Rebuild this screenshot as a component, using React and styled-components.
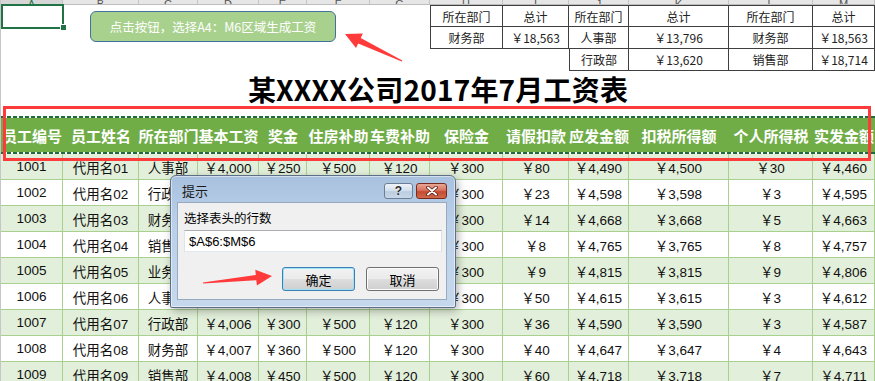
import styled, { createGlobalStyle } from 'styled-components';

const COLS = '62px 76px 59px 61px 48px 63px 60px 73px 66px 60px 100px 84px 62px';
const LETTERS = ['A', 'B', 'C', 'D', 'E', 'F', 'G', 'H', 'I', 'J', 'K', 'L', 'M'];

const HEADERS = [
  '员工编号', '员工姓名', '所在部门', '基本工资', '奖金', '住房补助', '车费补助',
  '保险金', '请假扣款', '应发金额', '扣税所得额', '个人所得税', '实发金额',
];

const ROWS = [
  ['1001', '代用名01', '人事部', '￥4,000', '￥250', '￥500', '￥120', '￥300', '￥80', '￥4,490', '￥4,500', '￥30', '￥4,460'],
  ['1002', '代用名02', '行政部', '￥4,001', '￥300', '￥500', '￥120', '￥300', '￥23', '￥4,598', '￥3,598', '￥3', '￥4,595'],
  ['1003', '代用名03', '财务部', '￥4,002', '￥360', '￥500', '￥120', '￥300', '￥14', '￥4,668', '￥3,668', '￥5', '￥4,663'],
  ['1004', '代用名04', '销售部', '￥4,003', '￥450', '￥500', '￥120', '￥300', '￥8', '￥4,765', '￥3,765', '￥8', '￥4,757'],
  ['1005', '代用名05', '业务部', '￥4,004', '￥500', '￥500', '￥120', '￥300', '￥9', '￥4,815', '￥3,815', '￥9', '￥4,806'],
  ['1006', '代用名06', '人事部', '￥4,005', '￥340', '￥500', '￥120', '￥300', '￥50', '￥4,615', '￥3,615', '￥3', '￥4,612'],
  ['1007', '代用名07', '行政部', '￥4,006', '￥300', '￥500', '￥120', '￥300', '￥36', '￥4,590', '￥3,590', '￥3', '￥4,587'],
  ['1008', '代用名08', '财务部', '￥4,007', '￥360', '￥500', '￥120', '￥300', '￥40', '￥4,647', '￥3,647', '￥4', '￥4,643'],
  ['1009', '代用名09', '销售部', '￥4,008', '￥450', '￥500', '￥120', '￥300', '￥60', '￥4,718', '￥3,718', '￥7', '￥4,711'],
];

// summary block, columns H..M, null = empty cell without border
const SUMMARY = [
  ['所在部门', '总计', '所在部门', '总计', '所在部门', '总计'],
  ['财务部', '￥18,563', '人事部', '￥13,796', '财务部', '￥18,563'],
  [null, null, '行政部', '￥13,620', '销售部', '￥18,714'],
];

const GlobalStyle = createGlobalStyle`
  html, body {
    margin: 0;
    padding: 0;
    background: #fff;
  }
  body {
    font-family: "Noto Sans CJK SC", "Liberation Sans", sans-serif;
    overflow: hidden;
  }
`;

const Page = styled.div`
  position: relative;
  width: 875px;
  height: 381px;
  overflow: hidden;
  background: #fff;
`;

const Sheet = styled.div`
  border-left: 1px solid #c6c6c6;
`;

const ColStrip = styled.div`
  display: grid;
  grid-template-columns: ${COLS};
  height: 4px;
  overflow: hidden;
  border-bottom: 1px solid #bdbdbd;
`;

const ColHead = styled.div`
  display: flex;
  align-items: flex-end;
  justify-content: center;
  background: ${(p) => (p.$active ? '#d6d6d6' : '#e6e6e6')};
  border-right: 1px solid #c4c4c4;
  color: ${(p) => (p.$active ? '#217346' : '#555')};
  font-family: "Liberation Sans", sans-serif;
  font-size: 11px;
`;

const ColLabel = styled.span`
  display: block;
  line-height: 8px;
  flex-shrink: 0;
`;

const TopRow = styled.div`
  display: grid;
  grid-template-columns: ${COLS};
  height: 22px;
`;

const Blank = styled.div``;

const SelectedCell = styled.div`
  position: relative;
`;

const SelectionBox = styled.div`
  position: absolute;
  left: 0;
  top: -1px;
  right: -1px;
  bottom: -2px;
  border: 2px solid #217346;
`;

const FillHandle = styled.div`
  position: absolute;
  right: -4px;
  bottom: -4px;
  width: 5px;
  height: 5px;
  background: #217346;
  border: 1px solid #fff;
`;

const SumCell = styled.div`
  display: flex;
  align-items: center;
  justify-content: center;
  box-sizing: border-box;
  font-size: 12px;
  color: #222;
  white-space: nowrap;
  border-right: 1px solid #3f3f3f;
  border-bottom: 1px solid #3f3f3f;
  border-top: ${(p) => (p.$top ? '1px solid #3f3f3f' : 'none')};
  border-left: ${(p) => (p.$edge ? '1px solid #3f3f3f' : 'none')};
`;

const TitleRow = styled.div`
  height: 35px;
  display: flex;
  align-items: center;
  justify-content: center;
  font-size: 28px;
  font-weight: 700;
  color: #000;
  letter-spacing: 0.2px;
`;

const Spacer = styled.div`
  height: 10px;
`;

const Dash = styled.div`
  height: 2px;
  background: repeating-linear-gradient(90deg, #1e6b3c 0 4px, #ffffff 4px 6px);
`;

const HeadRow = styled.div`
  display: grid;
  grid-template-columns: ${COLS};
  height: 34px;
  background: #70ad47;
`;

const HeadCell = styled.div`
  display: flex;
  align-items: center;
  justify-content: center;
  white-space: nowrap;
  color: #fff;
  font-size: 15px;
  font-weight: 700;
`;

const DataRow = styled.div`
  display: grid;
  grid-template-columns: ${COLS};
  height: 26px;
  background: ${(p) => (p.$shade ? '#e2efda' : '#ffffff')};
`;

const DataCell = styled.div`
  display: flex;
  align-items: center;
  justify-content: center;
  box-sizing: border-box;
  white-space: nowrap;
  border-right: 1px solid #a9d08e;
  border-bottom: 1px solid #a9d08e;
  font-family: "Liberation Sans", "Noto Sans CJK SC", sans-serif;
  font-size: 13.5px;
  color: #111;
`;

const ShapeButton = styled.div`
  position: absolute;
  left: 90px;
  top: 11px;
  width: 246px;
  height: 31px;
  box-sizing: border-box;
  display: flex;
  align-items: center;
  justify-content: center;
  background: #a9d18e;
  border: 1px solid #41719c;
  border-radius: 6px;
  color: #fff;
  font-size: 12.5px;
`;

const RedFrame = styled.div`
  position: absolute;
  left: 3px;
  top: 106px;
  width: 868px;
  height: 55px;
  box-sizing: border-box;
  border: 3px solid #fe3b3b;
`;

const Dialog = styled.div`
  position: absolute;
  left: 170px;
  top: 175px;
  width: 286px;
  height: 133px;
  box-sizing: border-box;
  display: flex;
  flex-direction: column;
  padding: 0 8px 7px 6px;
  border: 1px solid #5d6f86;
  border-radius: 6px 6px 2px 2px;
  background: linear-gradient(180deg, #a8c1de 0%, #bad0e9 35%, #c6d8ec 100%);
  box-shadow: 2px 3px 8px rgba(0, 0, 0, 0.3), inset 0 0 0 1px rgba(255, 255, 255, 0.5);
  font-family: "Liberation Sans", "Noto Sans CJK SC", sans-serif;
`;

const TitleBar = styled.div`
  height: 26px;
  box-sizing: border-box;
  padding: 3px 0 0 5px;
  display: flex;
  align-items: center;
  gap: 3px;
`;

const TitleText = styled.div`
  flex: 1;
  font-size: 13px;
  color: #1a1a1a;
`;

const CapButton = styled.div`
  width: ${(p) => (p.$close ? '31px' : '29px')};
  height: 16px;
  box-sizing: border-box;
  display: flex;
  align-items: center;
  justify-content: center;
  border: 1px solid ${(p) => (p.$close ? '#7a2a1c' : '#6d7f95')};
  border-radius: 3px;
  background: ${(p) =>
    p.$close
      ? 'linear-gradient(180deg, #e9a897 0%, #d7725d 45%, #c44a32 55%, #d06a4c 100%)'
      : 'linear-gradient(180deg, #eef3f9 0%, #d5e1ee 45%, #bccde1 55%, #c9d8e9 100%)'};
  color: #2a2a2a;
  font-size: 12px;
  font-weight: 700;
  text-shadow: 0 0 2px #fff;
`;

const Client = styled.div`
  flex: 1;
  display: flex;
  flex-direction: column;
  padding: 7px 4px 0 6px;
  background: #f0f0f0;
  border: 1px solid #98aac0;
`;

const Prompt = styled.div`
  font-size: 12.5px;
  line-height: 18px;
  color: #000;
`;

const Field = styled.div`
  margin-top: 2px;
  height: 22px;
  box-sizing: border-box;
  display: flex;
  align-items: center;
  padding-left: 4px;
  background: #fff;
  border: 1px solid #abadb3;
  border-color: #abadb3 #dbdfe6 #e3e9ef #e2e3ea;
  font-size: 13px;
  color: #000;
`;

const ButtonRow = styled.div`
  margin-top: 15px;
  display: flex;
  justify-content: flex-end;
  gap: 11px;
  padding-right: 3px;
`;

const DlgButton = styled.div`
  width: 73px;
  height: 24px;
  box-sizing: border-box;
  display: flex;
  align-items: center;
  justify-content: center;
  border: 1px solid ${(p) => (p.$default ? '#3c7fb1' : '#707070')};
  border-radius: 3px;
  background: linear-gradient(180deg, #f2f2f2 0%, #ebebeb 48%, #dddddd 52%, #cfcfcf 100%);
  box-shadow: ${(p) => (p.$default ? 'inset 0 0 0 1px #9fe2f9' : 'inset 0 0 0 1px #fbfbfb')};
  font-size: 13px;
  color: #000;
`;

const Overlay = styled.svg`
  position: absolute;
  left: 0;
  top: 0;
  pointer-events: none;
`;

function arrowPoints(x1, y1, x2, y2, headLen, headHalf, neckHalf) {
  const len = Math.hypot(x2 - x1, y2 - y1);
  const dx = (x2 - x1) / len;
  const dy = (y2 - y1) / len;
  const nx = -dy;
  const ny = dx;
  const bx = x2 - dx * headLen;
  const by = y2 - dy * headLen;
  const pts = [
    [x1 + nx * 0.6, y1 + ny * 0.6],
    [bx + nx * neckHalf, by + ny * neckHalf],
    [bx + nx * headHalf, by + ny * headHalf],
    [x2, y2],
    [bx - nx * headHalf, by - ny * headHalf],
    [bx - nx * neckHalf, by - ny * neckHalf],
    [x1 - nx * 0.6, y1 - ny * 0.6],
  ];
  return pts.map((p) => p.map((v) => v.toFixed(1)).join(',')).join(' ');
}

const CloseGlyph = () => (
  <svg width='12' height='10' viewBox='0 0 12 10'>
    <path d='M2 1.5 L10 8.5 M10 1.5 L2 8.5' stroke='#5a1a10' strokeWidth='3.6' strokeLinecap='round' />
    <path d='M2 1.5 L10 8.5 M10 1.5 L2 8.5' stroke='#ffffff' strokeWidth='2' strokeLinecap='round' />
  </svg>
);

const App = () => {
  return (
    <Page>
      <GlobalStyle />
      <Sheet>
        <ColStrip>
          {LETTERS.map((l, i) => (
            <ColHead key={l} $active={i === 0}>
              <ColLabel>{l}</ColLabel>
            </ColHead>
          ))}
        </ColStrip>

        {SUMMARY.map((row, r) => (
          <TopRow key={r}>
            {r === 0 ? (
              <SelectedCell>
                <SelectionBox />
                <FillHandle />
              </SelectedCell>
            ) : (
              <Blank />
            )}
            {[1, 2, 3, 4, 5, 6].map((c) => (
              <Blank key={c} />
            ))}
            {row.map((text, c) =>
              text === null ? (
                <Blank key={c} />
              ) : (
                <SumCell key={c} $top={r === 0} $edge={c === 0 || row[c - 1] === null}>
                  {text}
                </SumCell>
              )
            )}
          </TopRow>
        ))}

        <TitleRow>某XXXX公司2017年7月工资表</TitleRow>
        <Spacer />

        <Dash />
        <HeadRow>
          {HEADERS.map((h) => (
            <HeadCell key={h}>{h}</HeadCell>
          ))}
        </HeadRow>
        <Dash />

        {ROWS.map((row, r) => (
          <DataRow key={row[0]} $shade={r % 2 === 0}>
            {row.map((v, c) => (
              <DataCell key={c}>{v}</DataCell>
            ))}
          </DataRow>
        ))}
      </Sheet>

      <ShapeButton>点击按钮，选择A4：M6区域生成工资</ShapeButton>
      <RedFrame />

      <Dialog>
        <TitleBar>
          <TitleText>提示</TitleText>
          <CapButton>?</CapButton>
          <CapButton $close>
            <CloseGlyph />
          </CapButton>
        </TitleBar>
        <Client>
          <Prompt>选择表头的行数</Prompt>
          <Field>$A$6:$M$6</Field>
          <ButtonRow>
            <DlgButton $default>确定</DlgButton>
            <DlgButton>取消</DlgButton>
          </ButtonRow>
        </Client>
      </Dialog>

      <Overlay width='875' height='381' viewBox='0 0 875 381'>
        <polygon points={arrowPoints(402, 61, 345, 34, 16, 8, 3)} fill='#ff3a3a' />
        <polygon points={arrowPoints(203, 283, 272, 276, 16, 8, 2.6)} fill='#ff3a3a' />
      </Overlay>
    </Page>
  );
};

export default App;
